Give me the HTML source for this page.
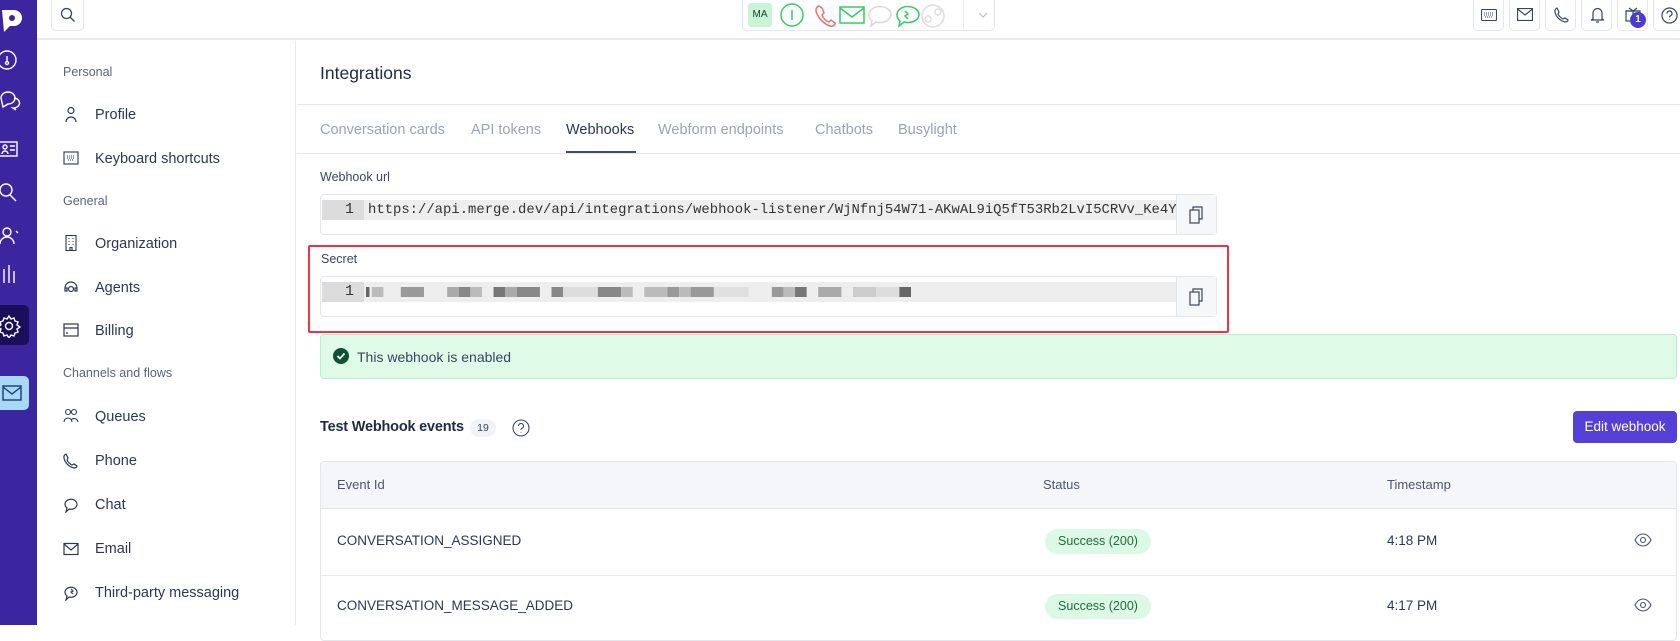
<!DOCTYPE html>
<html><head><meta charset="utf-8"><style>
*{box-sizing:border-box;margin:0;padding:0}
body{width:1680px;height:625px;overflow:hidden;background:#fff;font-family:"Liberation Sans",sans-serif;color:#2c3757;position:relative}
.a{position:absolute}
.side{left:0;top:0;width:37px;height:625px;background:#3b26a0}
.top{left:37px;top:0;width:1643px;height:40px;border-bottom:2px solid #e6eaf0;background:#fff}
.btn{position:absolute;top:0;height:31px;border:1px solid #e4e7ee;border-top:none;border-radius:0 0 5px 5px;background:#fff}
.nav{left:37px;top:41px;width:259px;height:584px;border-right:1px solid #e6e9ef}
.sec{position:absolute;left:26px;font-size:12.5px;color:#5a6478}
.it{position:absolute;left:58px;font-size:14.5px;color:#2c3757}
.ic{position:absolute;left:26px;width:16px;height:16px}
.tab{position:absolute;top:122px;font-size:14.5px;color:#9aa3b8}
.code{position:absolute;left:320px;width:897px;height:41px;border:1px solid #e3e6ec;border-radius:4px;background:#fff}
.row{position:absolute;left:1px;top:5px;width:855px;height:20px;background:#eeeeef}
.gut{position:absolute;left:0;top:0;width:42px;height:20px;background:#dcdcdc;font-family:"Liberation Mono",monospace;font-size:15px;text-align:right;padding-right:10px;line-height:20px;color:#333}
.cp{position:absolute;right:0;top:0;width:40px;height:39px;border-left:1px solid #e3e6ec;background:#f6f7f9}
.th{position:absolute;top:477px;font-size:13px;color:#4a5470}
.pill{position:absolute;left:1045px;width:106px;height:25px;border-radius:13px;background:#dcf9e6;color:#1f6b3a;font-size:12.5px;text-align:center;line-height:25px}
</style></head><body>
<div class="a side">
<svg class="a" style="left:0;top:8px" width="24" height="26" viewBox="0 0 24 26"><path d="M2 2h12a8 8 0 0 1 0 16h-4l-6 6z" fill="#fff"/><circle cx="12" cy="10" r="3" fill="#3b26a0"/></svg>
<svg class="a" style="left:-4px;top:48px" width="26" height="360" viewBox="0 0 26 360" fill="none" stroke="#fff" stroke-width="1.4">
<circle cx="11" cy="12" r="9"/><path d="M11 8v6"/><circle cx="11" cy="15" r="1.5"/>
<path d="M5 50a7 6 0 1 1 7 6l-5 3z"/><path d="M18 50a6 5 0 0 1-1 10l3 2"/>
<rect x="3" y="94" width="18" height="14"/><circle cx="9" cy="99" r="2"/><path d="M6 106a3 3 0 0 1 6 0M14 98h5M14 102h5"/>
<circle cx="10" cy="142" r="6"/><path d="M14 147l6 6"/>
<circle cx="11" cy="184" r="4"/><path d="M4 196a7 7 0 0 1 14 0M3 183l-2 2M20 183l2 2"/>
<path d="M3 235v-10M8 235v-14M13 235v-18M18 235v-12"/>
</svg>
<div class="a" style="left:0;top:305px;width:29px;height:40px;background:#1b0f5c;border-radius:0 5px 5px 0"></div>
<svg class="a" style="left:-3px;top:314px" width="24" height="24" viewBox="0 0 24 24" fill="none" stroke="#fff" stroke-width="1.4"><circle cx="12" cy="12" r="3.5"/><path d="M12 2l2 3 3-1 1 3 3 1-1 3 3 2-3 2 1 3-3 1-1 3-3-1-2 3-2-3-3 1-1-3-3-1 1-3-3-2 3-2-1-3 3-1 1-3 3 1z"/></svg>
<div class="a" style="left:0;top:376px;width:29px;height:34px;background:#a8d8f8;border-radius:0 5px 5px 0"></div>
<svg class="a" style="left:2px;top:385px" width="20" height="16" viewBox="0 0 20 16" fill="none" stroke="#1d3a6e" stroke-width="1.4"><rect x="1" y="1" width="18" height="14"/><path d="M1 2l9 7 9-7"/></svg>
</div>
<div class="a top">
<div class="btn" style="left:14px;width:33px"><svg class="a" style="left:8px;top:7px" width="16" height="16" viewBox="0 0 16 16" fill="none" stroke="#3a4560" stroke-width="1.3"><circle cx="6.5" cy="6.5" r="5"/><path d="M10 10l4.5 4.5"/></svg></div>
<div class="btn" style="left:705px;width:253px">
<div class="a" style="left:5px;top:3px;width:24px;height:24px;background:#c9f4d6;border-radius:3px;font-size:10px;text-align:center;line-height:24px;color:#1e3a2a">MA</div>
<svg class="a" style="left:36px;top:2px" width="190" height="28" viewBox="0 0 190 28" fill="none" stroke-width="1.5">
<circle cx="13" cy="13" r="11" stroke="#33cc66"/><path d="M13 8v10" stroke="#33cc66"/>
<path d="M40 4c-3 1-4 4-2 8 3 6 7 10 13 12 3 1 5-1 5-3l-4-3-2 2c-3-1-6-4-7-7l2-2-2-5z" stroke="#f07070"/>
<rect x="61" y="5" width="24" height="16" stroke="#33cc66"/><path d="M61 6l12 9 12-9" stroke="#33cc66"/>
<path d="M90 13a11 8 0 1 1 7 7l-5 4 1-5a8 8 0 0 1-3-6z" stroke="#d8d8d8"/>
<path d="M118 13a11 8 0 1 1 7 7l-5 4 1-5a8 8 0 0 1-3-6z" stroke="#33cc66"/><path d="M126 9l3 3-3 2 3 3" stroke="#33cc66"/>
<circle cx="154" cy="14" r="11" stroke="#dedede"/><circle cx="149" cy="17" r="3" stroke="#dedede"/><circle cx="159" cy="10" r="3" stroke="#dedede"/>
</svg>
<div class="a" style="left:220px;top:0;width:1px;height:30px;background:#e8e8e8"></div>
<svg class="a" style="left:235px;top:12px" width="10" height="6" viewBox="0 0 10 6" fill="none" stroke="#bbb"><path d="M1 1l4 4 4-4"/></svg>
</div>
<div class="btn" style="left:1436px;width:31px"><svg class="a" style="left:7px;top:9px" width="16" height="12" viewBox="0 0 16 12" fill="none" stroke="#3a4560" stroke-width="1.1"><rect x="0.5" y="0.5" width="15" height="11" rx="1"/><path d="M3 4h10M3 6h10M4 8h8" stroke-dasharray="1 1"/></svg></div>
<div class="btn" style="left:1472px;width:31px"><svg class="a" style="left:7px;top:8px" width="16" height="13" viewBox="0 0 16 13" fill="none" stroke="#3a4560" stroke-width="1.2"><rect x="0.5" y="0.5" width="15" height="12"/><path d="M0.5 1l7.5 6 7.5-6"/></svg></div>
<div class="btn" style="left:1508px;width:31px"><svg class="a" style="left:8px;top:7px" width="15" height="16" viewBox="0 0 15 16" fill="none" stroke="#3a4560" stroke-width="1.2"><path d="M3 1C1 2 0 4 2 8c2 4 5 6 9 7 2 0 3-1 3-2l-3-2-2 1c-2-1-4-3-5-5l1-2z"/></svg></div>
<div class="btn" style="left:1544px;width:31px"><svg class="a" style="left:8px;top:6px" width="15" height="18" viewBox="0 0 15 18" fill="none" stroke="#3a4560" stroke-width="1.2"><path d="M3 13V7a4.5 4.5 0 0 1 9 0v6l2 1H1z M6 16h3"/></svg></div>
<div class="btn" style="left:1580px;width:31px"><svg class="a" style="left:7px;top:6px" width="16" height="16" viewBox="0 0 16 16" fill="none" stroke="#3a4560" stroke-width="1.2"><rect x="1" y="5" width="14" height="10"/><path d="M1 5h14M8 5v10M4 2l4 3 4-3"/></svg><div class="a" style="left:12px;top:12px;width:16px;height:16px;border-radius:8px;background:#4a3ad6;color:#fff;font-size:10px;text-align:center;line-height:16px;font-weight:bold">1</div></div>
<div class="btn" style="left:1616px;width:31px"><svg class="a" style="left:7px;top:7px" width="17" height="17" viewBox="0 0 17 17" fill="none" stroke="#3a4560" stroke-width="1.2"><circle cx="8.5" cy="8.5" r="7.5"/><path d="M6 6.5a2.5 2.5 0 1 1 3.5 2.3c-.7.3-1 .8-1 1.5M8.5 12.5v.5"/></svg></div>
</div>
<div class="a nav">
<div class="sec" style="top:24px">Personal</div>
<svg class="ic" style="top:65px" viewBox="0 0 16 16" fill="none" stroke="#2c3757" stroke-width="1.2"><circle cx="8" cy="4.5" r="3"/><path d="M3 16a5 5 0 0 1 10 0"/></svg><div class="it" style="top:66px">Profile</div>
<svg class="ic" style="top:109px" viewBox="0 0 16 16" fill="none" stroke="#2c3757" stroke-width="1.1"><rect x="1" y="2" width="14" height="12"/><path d="M4 6h8M4 8h8M5 10h6" stroke-dasharray="1 1"/></svg><div class="it" style="top:110px">Keyboard shortcuts</div>
<div class="sec" style="top:153px">General</div>
<svg class="ic" style="top:194px" viewBox="0 0 16 16" fill="none" stroke="#2c3757" stroke-width="1.1"><rect x="3" y="0.5" width="10" height="15"/><path d="M6 3v1M10 3v1M6 6v1M10 6v1M6 9v1M10 9v1M7 15.5v-3h2v3"/></svg><div class="it" style="top:195px">Organization</div>
<svg class="ic" style="top:238px" viewBox="0 0 16 16" fill="none" stroke="#2c3757" stroke-width="1.2"><path d="M2 9a6 6 0 0 1 12 0M2 9v3h2V9zM12 9v3h2V9z"/><circle cx="8" cy="10" r="2.5"/></svg><div class="it" style="top:239px">Agents</div>
<svg class="ic" style="top:281px" viewBox="0 0 16 16" fill="none" stroke="#2c3757" stroke-width="1.2"><rect x="1" y="2" width="14" height="12"/><path d="M1 6h14M3 11h2"/></svg><div class="it" style="top:282px">Billing</div>
<div class="sec" style="top:325px">Channels and flows</div>
<svg class="ic" style="top:367px" viewBox="0 0 16 16" fill="none" stroke="#2c3757" stroke-width="1.1"><circle cx="5" cy="4" r="2.5"/><circle cx="11" cy="4" r="2.5"/><path d="M1 14a4 4 0 0 1 8 0M8 12a4 4 0 0 1 7 2"/></svg><div class="it" style="top:368px">Queues</div>
<svg class="ic" style="top:412px" viewBox="0 0 16 16" fill="none" stroke="#2c3757" stroke-width="1.2"><path d="M3 1C1 2 0 4 2 8c2 4 5 6 9 7 2 0 3-1 3-2l-3-2-2 1c-2-1-4-3-5-5l1-2z"/></svg><div class="it" style="top:412px">Phone</div>
<svg class="ic" style="top:456px" viewBox="0 0 16 16" fill="none" stroke="#2c3757" stroke-width="1.2"><path d="M2 7a6 5 0 1 1 4 5l-3 3 1-4a5 5 0 0 1-2-4z"/></svg><div class="it" style="top:456px">Chat</div>
<svg class="ic" style="top:500px" viewBox="0 0 16 16" fill="none" stroke="#2c3757" stroke-width="1.2"><rect x="1" y="2.5" width="14" height="11"/><path d="M1 3l7 6 7-6"/></svg><div class="it" style="top:500px">Email</div>
<svg class="ic" style="top:544px" viewBox="0 0 16 16" fill="none" stroke="#2c3757" stroke-width="1.2"><path d="M2 7a6 5 0 1 1 4 5l-3 3 1-4a5 5 0 0 1-2-4z"/><path d="M8 4l2 2-2 1 2 2"/></svg><div class="it" style="top:544px">Third-party messaging</div>
</div>
<div class="a" style="left:320px;top:63px;font-size:17.5px;color:#1e2a48">Integrations</div>
<div class="a" style="left:297px;top:104px;width:1383px;height:1px;background:#e6e9ef"></div>
<div class="tab" style="left:320px">Conversation cards</div>
<div class="tab" style="left:471px">API tokens</div>
<div class="tab" style="left:566px;color:#2a3656">Webhooks</div>
<div class="tab" style="left:658px">Webform endpoints</div>
<div class="tab" style="left:815px">Chatbots</div>
<div class="tab" style="left:898px">Busylight</div>
<div class="a" style="left:297px;top:153px;width:1383px;height:1px;background:#e6e9ef"></div>
<div class="a" style="left:566px;top:151px;width:70px;height:2px;background:#3d4b70"></div>
<div class="a" style="left:320px;top:170px;font-size:12.5px;color:#3a4560">Webhook url</div>
<div class="code" style="top:194px"><div class="row"><div class="gut">1</div><div class="a" style="left:46px;top:0;font-family:'Liberation Mono',monospace;font-size:13.9px;line-height:20px;color:#333;white-space:nowrap;width:808px;overflow:hidden">https://api.merge.dev/api/integrations/webhook-listener/WjNfnj54W71-AKwAL9iQ5fT53Rb2LvI5CRVv_Ke4Y</div></div><div class="cp"><svg class="a" style="left:12px;top:11px" width="15" height="18" viewBox="0 0 15 18" fill="none" stroke="#3a4560" stroke-width="1.2"><rect x="1" y="4" width="9" height="13"/><path d="M4 4V1h9v12h-3"/></svg></div></div>
<div class="a" style="left:308px;top:245px;width:921px;height:88px;border:2px solid #ee3344;border-radius:2px"></div>
<div class="a" style="left:321px;top:252px;font-size:12.5px;color:#3a4560">Secret</div>
<div class="code" style="top:276px"><div class="row"><div class="gut">1</div>
<svg class="a" style="left:44px;top:5px" width="545" height="10" viewBox="0 0 470 10" preserveAspectRatio="none"><g fill="#999">
<rect x="0" y="0" width="3" height="10" fill="#666"/><rect x="5" y="0" width="10" height="10" fill="#bbb"/><rect x="30" y="0" width="20" height="10" fill="#999"/><rect x="70" y="0" width="10" height="10" fill="#aaa"/><rect x="80" y="0" width="10" height="10" fill="#888"/><rect x="90" y="0" width="10" height="10" fill="#bbb"/><rect x="110" y="0" width="10" height="10" fill="#777"/><rect x="120" y="0" width="10" height="10" fill="#aaa"/><rect x="130" y="0" width="20" height="10" fill="#888"/><rect x="160" y="0" width="10" height="10" fill="#888"/><rect x="170" y="0" width="30" height="10" fill="#ddd"/><rect x="200" y="0" width="20" height="10" fill="#888"/><rect x="220" y="0" width="10" height="10" fill="#bbb"/><rect x="240" y="0" width="20" height="10" fill="#bbb"/><rect x="260" y="0" width="10" height="10" fill="#999"/><rect x="270" y="0" width="10" height="10" fill="#bbb"/><rect x="280" y="0" width="20" height="10" fill="#999"/><rect x="300" y="0" width="30" height="10" fill="#e0e0e0"/><rect x="350" y="0" width="10" height="10" fill="#999"/><rect x="360" y="0" width="10" height="10" fill="#bbb"/><rect x="370" y="0" width="10" height="10" fill="#777"/><rect x="390" y="0" width="20" height="10" fill="#aaa"/><rect x="420" y="0" width="20" height="10" fill="#ccc"/><rect x="440" y="0" width="20" height="10" fill="#ddd"/><rect x="460" y="0" width="10" height="10" fill="#666"/></g></svg></div><div class="cp"><svg class="a" style="left:12px;top:11px" width="15" height="18" viewBox="0 0 15 18" fill="none" stroke="#3a4560" stroke-width="1.2"><rect x="1" y="4" width="9" height="13"/><path d="M4 4V1h9v12h-3"/></svg></div></div>
<div class="a" style="left:320px;top:334px;width:1357px;height:45px;background:#dffbe8;border:1px solid #bdeecb;border-radius:4px"></div>
<div class="a" style="left:333px;top:348px;width:16px;height:16px;border-radius:8px;background:#0f5132"><svg width="16" height="16" viewBox="0 0 16 16" fill="none" stroke="#fff" stroke-width="1.8"><path d="M4.5 8l2.5 2.5 4.5-5"/></svg></div>
<div class="a" style="left:357px;top:349px;font-size:14px;color:#3a4560">This webhook is enabled</div>
<div class="a" style="left:320px;top:419px;font-size:14.5px;font-weight:bold;color:#1e2a48;letter-spacing:-0.2px">Test Webhook events</div>
<div class="a" style="left:470px;top:419px;width:26px;height:18px;border-radius:9px;background:#f0f2f6;font-size:10.5px;text-align:center;line-height:18px;color:#3a4560">19</div>
<svg class="a" style="left:512px;top:419px" width="18" height="18" viewBox="0 0 18 18" fill="none" stroke="#3a4560" stroke-width="1.1"><circle cx="9" cy="9" r="8"/><path d="M6.5 7a2.5 2.5 0 1 1 3.5 2.3c-.7.3-1 .8-1 1.5M9 13v.5"/></svg>
<div class="a" style="left:1573px;top:411px;width:104px;height:32px;border-radius:4px;background:#5440d6;color:#fff;font-size:13.5px;text-align:center;line-height:32px">Edit webhook</div>
<div class="a" style="left:320px;top:461px;width:1357px;height:180px;border:1px solid #e3e6ec;border-radius:4px;overflow:hidden">
<div class="a" style="left:0;top:0;width:1357px;height:47px;background:#f5f6fa;border-bottom:1px solid #e3e6ec"></div>
<div class="a" style="left:0;top:113px;width:1357px;height:1px;background:#e8eaef"></div>
</div>
<div class="th" style="left:337px">Event Id</div>
<div class="th" style="left:1043px">Status</div>
<div class="th" style="left:1387px">Timestamp</div>
<div class="a" style="left:337px;top:533px;font-size:13.5px;color:#2c3757">CONVERSATION_ASSIGNED</div>
<div class="a" style="left:337px;top:598px;font-size:13.5px;color:#2c3757">CONVERSATION_MESSAGE_ADDED</div>
<div class="pill" style="top:529px">Success (200)</div>
<div class="pill" style="top:594px">Success (200)</div>
<div class="a" style="left:1387px;top:533px;font-size:13.5px">4:18 PM</div>
<div class="a" style="left:1387px;top:598px;font-size:13.5px">4:17 PM</div>
<svg class="a" style="left:1634px;top:533px" width="18" height="14" viewBox="0 0 18 14" fill="none" stroke="#4a5470" stroke-width="1.1"><path d="M1 7c2-4 5-6 8-6s6 2 8 6c-2 4-5 6-8 6S3 11 1 7z"/><circle cx="9" cy="7" r="2.5"/></svg>
<svg class="a" style="left:1634px;top:598px" width="18" height="14" viewBox="0 0 18 14" fill="none" stroke="#4a5470" stroke-width="1.1"><path d="M1 7c2-4 5-6 8-6s6 2 8 6c-2 4-5 6-8 6S3 11 1 7z"/><circle cx="9" cy="7" r="2.5"/></svg>
</body></html>
